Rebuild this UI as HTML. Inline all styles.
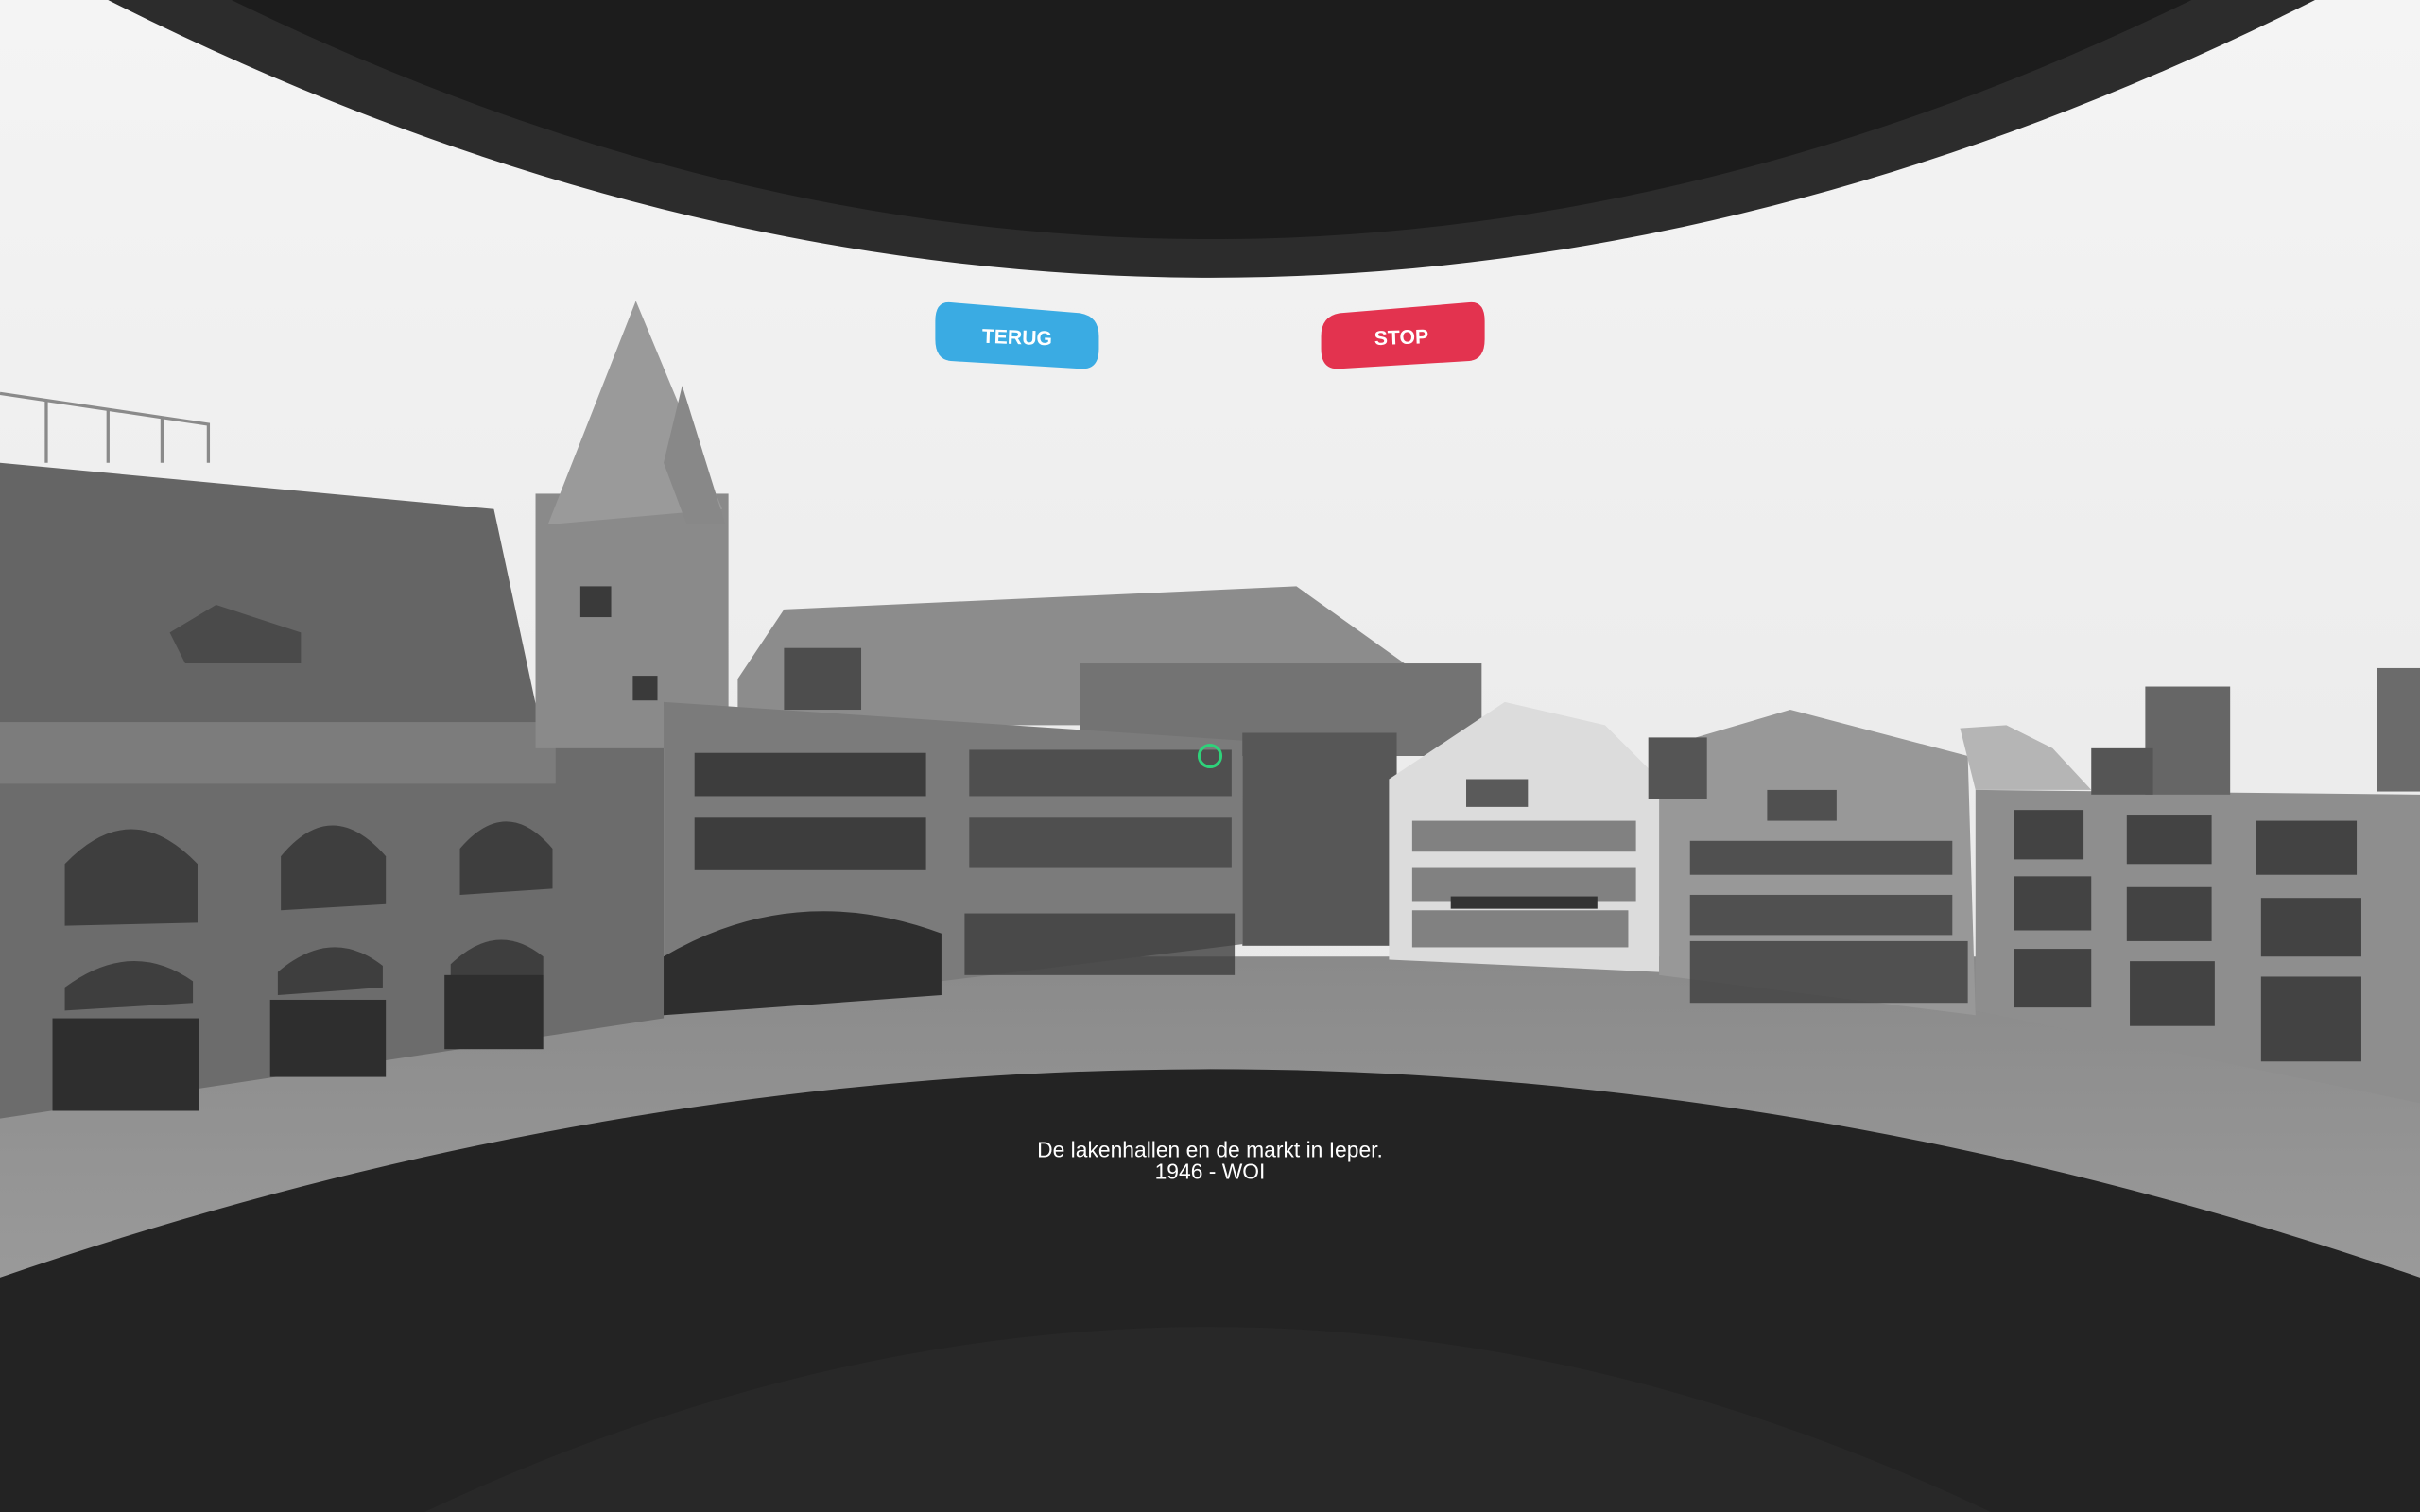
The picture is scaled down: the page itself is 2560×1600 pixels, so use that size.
<!DOCTYPE html>
<html><head><meta charset="utf-8"><style>
html,body{margin:0;padding:0;background:#232323;overflow:hidden}
svg{display:block}
</style></head><body>
<svg width="2560" height="1600" viewBox="0 0 1568 980" preserveAspectRatio="none" xmlns="http://www.w3.org/2000/svg">
<defs>
<linearGradient id="sky" x1="0" y1="0" x2="0" y2="1"><stop offset="0" stop-color="#f4f4f4"/><stop offset="0.5" stop-color="#ececec"/><stop offset="1" stop-color="#e2e2e2"/></linearGradient>
<linearGradient id="gr" x1="0" y1="0" x2="0" y2="1"><stop offset="0" stop-color="#8a8a8a"/><stop offset="1" stop-color="#a5a5a5"/></linearGradient>
</defs>
<rect width="1568" height="980" fill="url(#sky)"/>
<rect y="620" width="1568" height="360" fill="url(#gr)"/>
<polygon points="0,300 320,330 350,470 0,470" fill="#656565"/>
<g stroke="#8a8a8a" stroke-width="2" fill="none"><path d="M0,255 L135,275 L135,300"/><path d="M30,260 L30,300 M70,265 L70,300 M105,270 L105,300"/></g>
<polygon points="110,410 140,392 195,410 195,430 120,430" fill="#4a4a4a"/>
<polygon points="0,468 430,470 430,660 0,725" fill="#6c6c6c"/>
<rect x="0" y="468" width="360" height="40" fill="#7c7c7c"/>
<g fill="#3e3e3e">
<path d="M42,600 L42,560 Q85,515 128,560 L128,598 Z"/>
<path d="M182,590 L182,555 Q215,515 250,555 L250,586 Z"/>
<path d="M298,580 L298,550 Q328,515 358,550 L358,576 Z"/>
<path d="M42,655 L42,640 Q85,608 125,636 L125,650 Z"/>
<path d="M180,645 L180,630 Q215,600 248,626 L248,640 Z"/>
<path d="M292,638 L292,625 Q322,596 352,620 L352,632 Z"/>
<rect x="34" y="660" width="95" height="60" fill="#2e2e2e"/>
<rect x="175" y="648" width="75" height="50" fill="#2e2e2e"/>
<rect x="288" y="632" width="64" height="48" fill="#2e2e2e"/>
</g>
<rect x="347" y="320" width="125" height="165" fill="#8a8a8a"/>
<polygon points="355,340 412,195 468,330" fill="#9a9a9a"/>
<polygon points="430,300 442,250 470,340 445,340" fill="#888"/>
<g fill="#3a3a3a"><rect x="376" y="380" width="20" height="20"/><rect x="410" y="438" width="16" height="16"/></g>
<polygon points="478,440 508,395 840,380 910,430 910,470 478,470" fill="#8c8c8c"/>
<rect x="700" y="430" width="260" height="60" fill="#737373"/>
<polygon points="430,455 805,480 805,612 430,658" fill="#7b7b7b"/>
<g fill="#3d3d3d">
<rect x="450" y="488" width="150" height="28"/><rect x="450" y="530" width="150" height="34"/>
<rect x="628" y="486" width="170" height="30" opacity=".7"/><rect x="628" y="530" width="170" height="32" opacity=".7"/>
<path d="M430,620 Q515,570 610,605 L610,645 L430,658 Z" fill="#2e2e2e"/>
<rect x="625" y="592" width="175" height="40" opacity=".8"/>
</g>
<rect x="508" y="420" width="50" height="40" fill="#4d4d4d"/>
<rect x="805" y="475" width="100" height="138" fill="#575757"/>
<polygon points="900,505 975,455 1040,470 1075,505 1075,630 900,622" fill="#dcdcdc"/>
<g fill="#5a5a5a">
<rect x="950" y="505" width="40" height="18"/><rect x="915" y="532" width="145" height="20" opacity=".7"/>
<rect x="915" y="562" width="145" height="22" opacity=".7"/><rect x="915" y="590" width="140" height="24" opacity=".7"/>
<rect x="940" y="581" width="95" height="8" fill="#333"/>
</g>
<polygon points="1075,485 1160,460 1275,490 1280,658 1075,632" fill="#989898"/>
<g fill="#3f3f3f" opacity=".8">
<rect x="1145" y="512" width="45" height="20"/><rect x="1095" y="545" width="170" height="22"/>
<rect x="1095" y="580" width="170" height="26"/><rect x="1095" y="610" width="180" height="40"/>
</g>
<rect x="1068" y="478" width="38" height="40" fill="#555"/>
<polygon points="1280,512 1568,515 1568,715 1280,655" fill="#8e8e8e"/>
<rect x="1390" y="445" width="55" height="70" fill="#666"/>
<rect x="1355" y="485" width="40" height="30" fill="#555"/>
<rect x="1540" y="433" width="28" height="80" fill="#6b6b6b"/>
<polygon points="1270,472 1300,470 1330,485 1355,512 1280,512" fill="#b5b5b5"/>
<g fill="#363636" opacity=".85">
<rect x="1305" y="525" width="45" height="32"/><rect x="1378" y="528" width="55" height="32"/><rect x="1462" y="532" width="65" height="35"/>
<rect x="1305" y="568" width="50" height="35"/><rect x="1378" y="575" width="55" height="35"/><rect x="1465" y="582" width="65" height="38"/>
<rect x="1305" y="615" width="50" height="38"/><rect x="1380" y="623" width="55" height="42"/><rect x="1465" y="633" width="65" height="55"/>
</g>
<path d="M70,0 Q784,360 1500,0 Z" fill="#2c2c2c"/>
<path d="M150,0 Q784,310 1420,0 Z" fill="#1c1c1c"/>
<path d="M0,828 Q784,558 1568,828 L1568,980 L0,980 Z" fill="#232323"/>
<path d="M275,980 Q784,740 1290,980 Z" fill="#282828"/>
<path d="M616,196 L700,203 Q712,205 712,218 L712,226 Q712,240 700,239 L616,234 Q606,233 606,220 L606,208 Q606,195 616,196 Z" fill="#3aabe3"/>
<text x="659" y="223" text-anchor="middle" font-family="Liberation Sans, sans-serif" font-weight="bold" font-size="13" fill="#fff" transform="rotate(2 659 219)">TERUG</text>
<path d="M952,196 L868,203 Q856,205 856,218 L856,226 Q856,240 868,239 L952,234 Q962,233 962,220 L962,208 Q962,195 952,196 Z" fill="#e3334f"/>
<text x="908" y="223" text-anchor="middle" font-family="Liberation Sans, sans-serif" font-weight="bold" font-size="13" fill="#fff" transform="rotate(-2 908 219)">STOP</text>
<circle cx="784" cy="490" r="7" fill="none" stroke="#2ed27a" stroke-width="2"/>
<text x="784" y="750" text-anchor="middle" font-family="Liberation Sans, sans-serif" font-size="14" fill="#fff">De lakenhallen en de markt in Ieper.</text>
<text x="784" y="764" text-anchor="middle" font-family="Liberation Sans, sans-serif" font-size="14" fill="#fff">1946 - WOI</text>
</svg>
</body></html>
